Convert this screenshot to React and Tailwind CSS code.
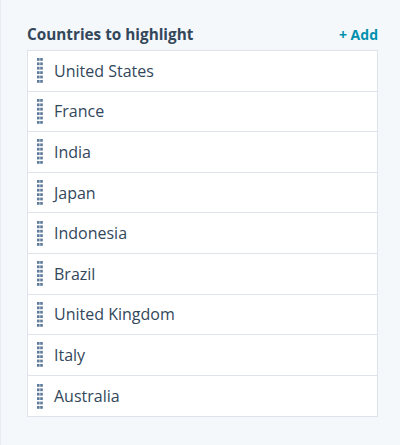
const countries = [
  "United States",
  "France",
  "India",
  "Japan",
  "Indonesia",
  "Brazil",
  "United Kingdom",
  "Italy",
  "Australia",
];

function DragHandle() {
  const rows = [0, 1, 2, 3, 4, 5];
  return (
    <svg width="6" height="25" viewBox="0 0 6 25" className="shrink-0">
      {rows.map((r) => (
        <g key={r} fill="#5f7b9b">
          <rect x="0" y={r * 4.4} width="2.6" height="2.8" />
          <rect x="3.2" y={r * 4.4} width="2.6" height="2.8" />
        </g>
      ))}
    </svg>
  );
}

export default function App() {
  return (
    <div
      className="w-[400px] h-[445px] bg-[#f5f8fa] border-l border-[#e7edf3] pl-[26px] pr-[22px] pt-[22px]"
      style={{ fontFamily: '"Open Sans", "Liberation Sans", sans-serif' }}
    >
      {/* HEADER */}
      <div className="flex items-center justify-between h-[24px] mb-[4px]">
        <h2 className="text-[15.3px] font-bold text-[#33475b]">
          Countries to highlight
        </h2>
        <button className="text-[14px] font-bold text-[#0091ae]">+ Add</button>
      </div>

      {/* LIST */}
      <ul className="bg-white border border-[#dfe3eb]">
        {countries.map((name, i) => (
          <li
            key={name}
            className={`flex items-center h-[40.6px] pl-[9px] gap-[11px] ${
              i < countries.length - 1 ? "border-b border-[#dfe3eb]" : ""
            }`}
          >
            <DragHandle />
            <span className="text-[16px] text-[#33475b]">{name}</span>
          </li>
        ))}
      </ul>
    </div>
  );
}
